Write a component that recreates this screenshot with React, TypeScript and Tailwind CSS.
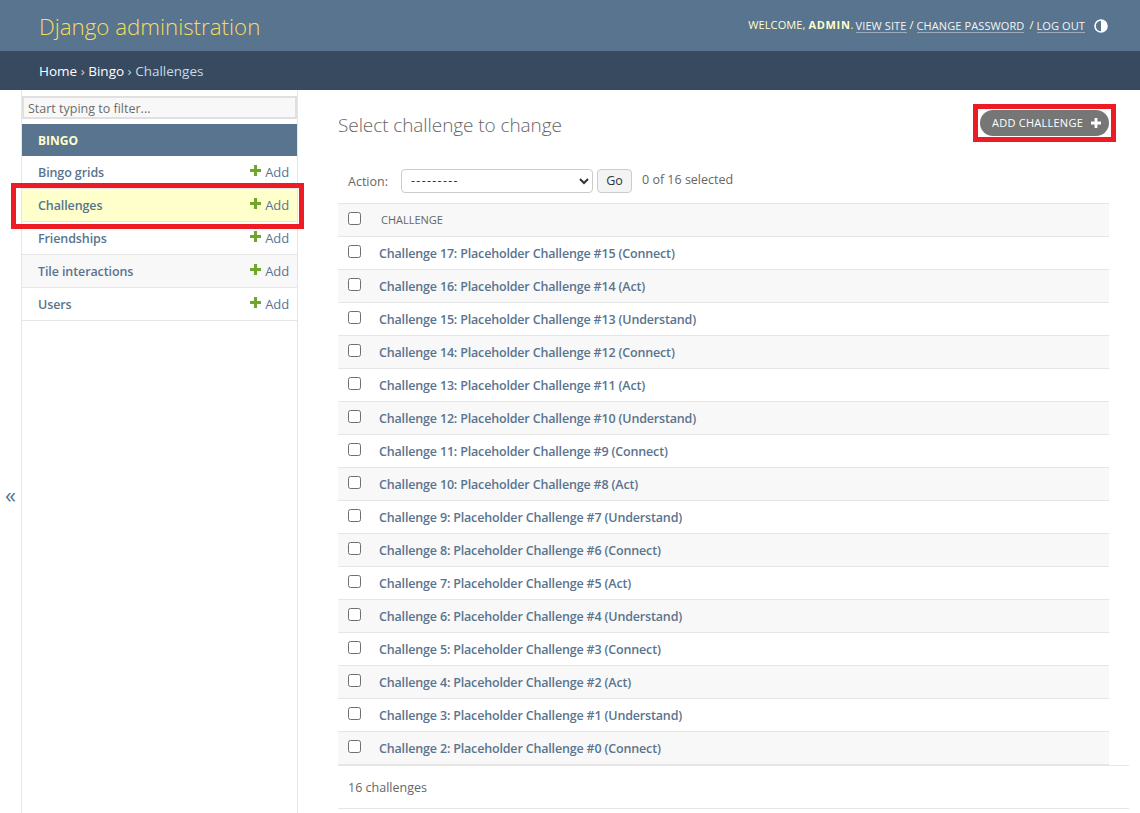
import React from 'react';

const MODELS = [
  { name: 'Bingo grids' },
  { name: 'Challenges', current: true },
  { name: 'Friendships' },
  { name: 'Tile interactions' },
  { name: 'Users' },
];

const ROWS = [
  'Challenge 17: Placeholder Challenge #15 (Connect)',
  'Challenge 16: Placeholder Challenge #14 (Act)',
  'Challenge 15: Placeholder Challenge #13 (Understand)',
  'Challenge 14: Placeholder Challenge #12 (Connect)',
  'Challenge 13: Placeholder Challenge #11 (Act)',
  'Challenge 12: Placeholder Challenge #10 (Understand)',
  'Challenge 11: Placeholder Challenge #9 (Connect)',
  'Challenge 10: Placeholder Challenge #8 (Act)',
  'Challenge 9: Placeholder Challenge #7 (Understand)',
  'Challenge 8: Placeholder Challenge #6 (Connect)',
  'Challenge 7: Placeholder Challenge #5 (Act)',
  'Challenge 6: Placeholder Challenge #4 (Understand)',
  'Challenge 5: Placeholder Challenge #3 (Connect)',
  'Challenge 4: Placeholder Challenge #2 (Act)',
  'Challenge 3: Placeholder Challenge #1 (Understand)',
  'Challenge 2: Placeholder Challenge #0 (Connect)',
];

const Plus: React.FC<{ className: string }> = ({ className }) => (
  <svg className={className} viewBox="0 0 10 10" fill="currentColor">
    <path d="M3.6 0h2.8v3.6H10v2.8H6.4V10H3.6V6.4H0V3.6h3.6z" />
  </svg>
);

const Checkbox = () => (
  <span className="block w-[13px] h-[13px] rounded-[2.5px] border border-[#6f6f6f] bg-white" />
);

export default function App() {
  return (
    <div className="relative w-[1140px] h-[813px] overflow-hidden bg-white font-['Open_Sans','Noto_Sans',sans-serif] text-[12.5px] text-[#333]">
      {/* Header */}
      <header className="h-[51px] bg-[#58748f] flex items-center justify-between pl-[39px] pr-[32px]">
        <div className="pt-[3px] text-[22.3px] font-light text-[#f5dd5d] leading-none">Django administration</div>
        <div className="flex items-center text-[11px] uppercase text-[#ffc] tracking-[0.1px] whitespace-pre">
          <span>Welcome, </span>
          <b className="font-bold tracking-[0.7px]">Admin</b>
          <span className="mr-[-1px]">. </span>
          <span className="border-b border-[#ffffff66] leading-[13px] text-[#f5f5f5]">View site</span>
          <span> / </span>
          <span className="border-b border-[#ffffff66] leading-[13px] text-[#f5f5f5]">Change password</span>
          <span className="ml-[2px]"> / </span>
          <span className="border-b border-[#ffffff66] leading-[13px] text-[#f5f5f5]">Log out</span>
          <svg className="w-[14px] h-[14px] ml-[9px]" viewBox="0 0 14 14">
            <circle cx="7" cy="7" r="6" fill="none" stroke="#fff" strokeWidth="1.6" />
            <path d="M7 1a6 6 0 0 1 0 12z" fill="#fff" />
          </svg>
        </div>
      </header>

      {/* Breadcrumbs */}
      <nav className="h-[39px] bg-[#374a5f] flex items-center pl-[39px] pt-[2px] text-[13.5px] text-[#c4dce8] whitespace-pre">
        <span className="text-white">Home</span>
        <span> › </span>
        <span className="text-white">Bingo</span>
        <span> › Challenges</span>
      </nav>

      <div className="flex h-[723px]">
        {/* Collapse toggle */}
        <div className="w-[22px] border-r border-[#e6e6e6] flex items-center justify-center pt-[84px] text-[22px] text-[#58748f]">
          <span className="leading-none">«</span>
        </div>

        {/* Sidebar */}
        <aside className="w-[276px] border-r border-[#e6e6e6] pt-[6px]">
          <div className="h-[23px] border-2 border-[#e0e0e0] bg-[#f8f8f8] pl-[4px] pt-[3px] flex items-center text-[#6d6d6d]">
            Start typing to filter...
          </div>
          <div className="mt-[5px] h-[32px] bg-[#58748f] pl-[16px] pt-[1px] flex items-center text-[12px] font-bold text-[#ffc] uppercase">
            Bingo
          </div>
          {MODELS.map((model, i) => (
            <div
              key={model.name}
              className={`h-[33px] border-b border-[#e6e6e6] flex items-center justify-between pl-[16px] pr-[8px] pt-[1px] ${
                model.current ? 'bg-[#ffffcc]' : i % 2 === 1 ? 'bg-[#f8f8f8]' : 'bg-white'
              }`}
            >
              <span className="pt-[2px] font-semibold tracking-[-0.1px] text-[#58748f]">{model.name}</span>
              <span className="flex items-center text-[13px] tracking-[-0.1px] text-[#58748f]">
                <Plus className="w-[11px] h-[11px] text-[#70a52e] mr-[4px] mb-[5px]" />
                Add
              </span>
            </div>
          ))}
        </aside>

        {/* Main */}
        <main className="w-[842px] pl-[40px] pr-[11px]">
          <div className="h-[79px] pr-[20px] flex items-start justify-between">
            <h1 className="mt-[21px] text-[19px] font-light tracking-[-0.08px] text-[#666] leading-[28px]">Select challenge to change</h1>
            <div className="mt-[20px] h-[26px] w-[129px] rounded-[13px] bg-[#767676] flex items-center justify-between pl-[12px] pr-[8px] text-[11px] text-white uppercase tracking-[0.25px]">
              Add challenge
              <Plus className="w-[10px] h-[10px] text-white" />
            </div>
          </div>

          <div className="w-[771px] h-[34px] pb-[10px] flex items-center pl-[10px] text-[#666]">
            <span className="pt-[2px]">Action:</span>
            <span className="ml-[13px] w-[192px] h-[24px] rounded-[4px] border border-[#ccc] bg-white flex items-center justify-between pl-[9px] pr-[3px] text-[#333]">
              <span className="tracking-[1.3px]">---------</span>
              <svg className="w-[10px] h-[10px]" viewBox="0 0 10 10" fill="none" stroke="#333" strokeWidth="2">
                <path d="M1 3l4 4 4-4" />
              </svg>
            </span>
            <span className="ml-[4px] w-[35px] h-[24px] rounded-[4px] border border-[#ccc] bg-[#f4f4f4] flex items-center justify-center text-[#333]">Go</span>
            <span className="ml-[10px] mb-[2px]">0 of 16 selected</span>
          </div>

          <div className="w-[771px]">
            <div className="h-[34px] border-y border-[#e6e6e6] bg-[#f8f8f8] flex items-center pl-[10px] text-[11px] font-medium uppercase text-[#666]">
              <span className="mb-[3px]"><Checkbox /></span>
              <span className="ml-[20px]">Challenge</span>
            </div>
            {ROWS.map((row, i) => (
              <div
                key={row}
                className={`h-[33px] border-b border-[#e6e6e6] flex items-center pl-[10px] ${i % 2 === 1 ? 'bg-[#f8f8f8]' : 'bg-white'}`}
              >
                <span className="mb-[4px]"><Checkbox /></span>
                <span className="ml-[18px] pt-[2px] font-semibold tracking-[-0.17px] text-[#58748f]">{row}</span>
              </div>
            ))}
          </div>

          <div className="h-[44px] border-y border-[#e6e6e6] flex items-center pl-[10px] pt-[3px] text-[#666]">16 challenges</div>
        </main>
      </div>

      {/* Red annotation boxes */}
      <div className="absolute left-[11px] top-[183px] w-[293px] h-[46px] border-[5px] border-[#ed1c24]" />
      <div className="absolute left-[973px] top-[104px] w-[143px] h-[38px] border-[5px] border-[#ed1c24]" />
    </div>
  );
}
